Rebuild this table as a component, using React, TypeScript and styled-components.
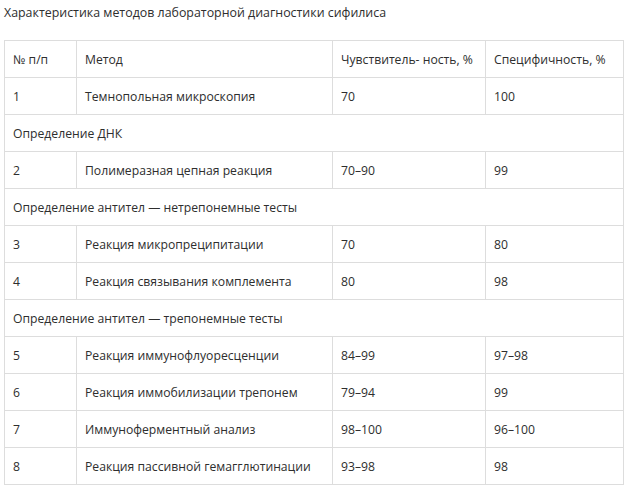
import React from "react";
import styled, { createGlobalStyle } from "styled-components";

type row =
  | { kind: "item"; n: string; method: string; sens: string; spec: string }
  | { kind: "group"; title: string };

const rows: row[] = [
  { kind: "item", n: "1", method: "Темнопольная микроскопия", sens: "70", spec: "100" },
  { kind: "group", title: "Определение ДНК" },
  { kind: "item", n: "2", method: "Полимеразная цепная реакция", sens: "70–90", spec: "99" },
  { kind: "group", title: "Определение антител — нетрепонемные тесты" },
  { kind: "item", n: "3", method: "Реакция микропреципитации", sens: "70", spec: "80" },
  { kind: "item", n: "4", method: "Реакция связывания комплемента", sens: "80", spec: "98" },
  { kind: "group", title: "Определение антител — трепонемные тесты" },
  { kind: "item", n: "5", method: "Реакция иммунофлуоресценции", sens: "84–99", spec: "97–98" },
  { kind: "item", n: "6", method: "Реакция иммобилизации трепонем", sens: "79–94", spec: "99" },
  { kind: "item", n: "7", method: "Иммуноферментный анализ", sens: "98–100", spec: "96–100" },
  { kind: "item", n: "8", method: "Реакция пассивной гемагглютинации", sens: "93–98", spec: "98" },
];

const GlobalStyle = createGlobalStyle`
  body {
    margin: 0;
    background: #fff;
    font-family: "Open Sans", "Noto Sans", sans-serif;
    color: #2e2e2e;
  }
`;

const Page = styled.div`
  padding: 0 4px;
`;

const Caption = styled.div`
  font-size: 12.4px;
  line-height: 18px;
  padding-top: 4px;
  margin-bottom: 18px;
`;

const Table = styled.table`
  width: 619px;
  border-collapse: collapse;
  table-layout: fixed;
  font-size: 12.2px;
`;

const Cell = styled.td<{ $w?: number }>`
  border: 1px solid #ddd;
  height: 37px;
  padding: 0 8px;
  box-sizing: border-box;
  vertical-align: middle;
  white-space: nowrap;
  width: ${(p) => (p.$w ? `${p.$w}px` : "auto")};
`;

const App = () => {
  return (
    <Page>
      <GlobalStyle />
      <Caption>Характеристика методов лабораторной диагностики сифилиса</Caption>
      <Table>
        <tbody>
          <tr>
            <Cell $w={72}>№ п/п</Cell>
            <Cell $w={256}>Метод</Cell>
            <Cell $w={153}>Чувствитель- ность, %</Cell>
            <Cell $w={138}>Специфичность, %</Cell>
          </tr>
          {rows.map((r, i) =>
            r.kind === "group" ? (
              <tr key={i}>
                <Cell colSpan={4}>{r.title}</Cell>
              </tr>
            ) : (
              <tr key={i}>
                <Cell>{r.n}</Cell>
                <Cell>{r.method}</Cell>
                <Cell>{r.sens}</Cell>
                <Cell>{r.spec}</Cell>
              </tr>
            )
          )}
        </tbody>
      </Table>
    </Page>
  );
};

export default App;
